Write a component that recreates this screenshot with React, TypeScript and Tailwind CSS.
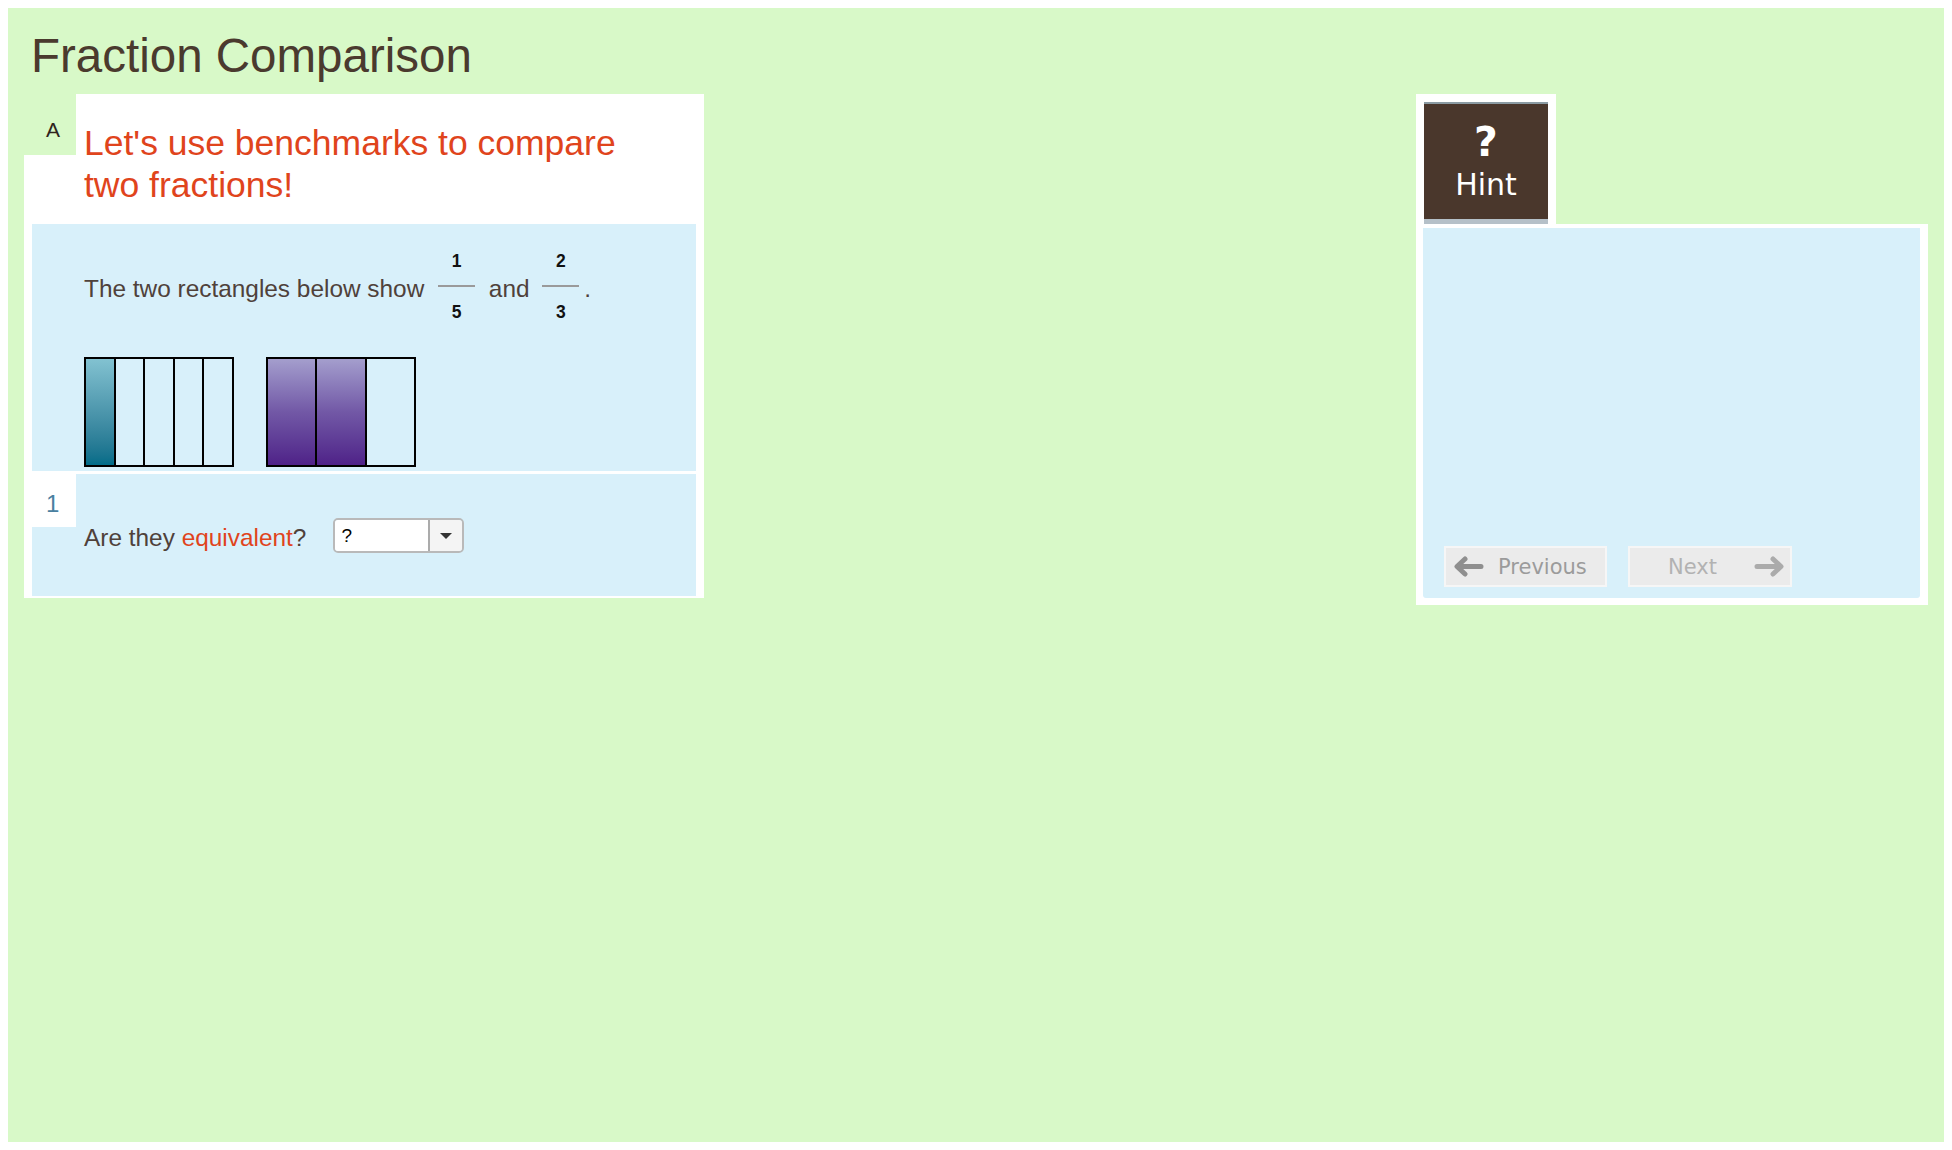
import React from "react";

const SANS = { fontFamily: "'Liberation Sans', Arial, sans-serif" };
const DEJAVU = { fontFamily: "'DejaVu Sans', Verdana, sans-serif" };

function Fraction({ top, bottom, className = "" }: { top: string; bottom: string; className?: string }) {
  return (
    <span
      className={`mb-[8px] inline-flex flex-col items-center align-middle text-[17.5px] font-bold leading-[20px] text-[#111] ${className}`}
    >
      <span>{top}</span>
      <span className="mb-[15px] mt-[14px] h-[2px] w-[37px] bg-[#9a9a9a]" />
      <span>{bottom}</span>
    </span>
  );
}

function FractionBar({ parts, filled, shade }: { parts: number; filled: number; shade: string }) {
  return (
    <div className="flex h-[110px] w-[150px] border-2 border-black">
      {Array.from({ length: parts }).map((_, i) => (
        <div
          key={i}
          className={`flex-1 ${i > 0 ? "border-l-2 border-black" : ""} ${i < filled ? shade : ""}`}
        />
      ))}
    </div>
  );
}

function Arrow({ dir, color }: { dir: "left" | "right"; color: string }) {
  return (
    <svg width="31" height="21" viewBox="0 0 31 21" className={dir === "right" ? "-scale-x-100" : ""}>
      <path
        d="M12 3 L4 10.5 L12 18 M5 10.5 H28"
        fill="none"
        stroke={color}
        strokeWidth="5"
        strokeLinecap="round"
        strokeLinejoin="round"
      />
    </svg>
  );
}

export default function App() {
  return (
    <div className="min-h-screen bg-white p-2" style={SANS}>
      <div className="h-[1134px] bg-[#d8f9c8]">
        <div className="h-[86px] pl-[23px] pt-[22px]">
          <h1 className="text-[47.5px] leading-[52px] text-[#4a3a2e]">Fraction Comparison</h1>
        </div>

        <div className="flex items-start justify-between px-4">
          {/* problem panel */}
          <div className="relative w-[680px] bg-white px-2 pb-[2px] pt-[28px]">
            <div className="absolute left-0 top-0 h-[61px] w-[52px] bg-[#d8f9c8] pl-[22px] pt-[25px] text-[21px] leading-[21px] text-[#2f241d]">
              A
            </div>
            <h2 className="ml-[52px] max-w-[560px] text-[35.5px] leading-[42px] text-[#e0441c]">
              Let's use benchmarks to compare two fractions!
            </h2>

            <div className="mt-[18px] h-[247px] bg-[#d8f0fa] pl-[52px] pt-[27px]">
              <p className="text-[24.4px] leading-[28px] text-[#4f413a]">
                The two rectangles below show{" "}
                <Fraction top="1" bottom="5" className="mx-[7px]" />
                {" "}and{" "}
                <Fraction top="2" bottom="3" className="ml-[6px] mr-[5px]" />.
              </p>
              <div className="mt-[27px] flex gap-[32px]">
                <FractionBar parts={5} filled={1} shade="bg-linear-to-b from-[#82c2d1] to-[#006c88]" />
                <FractionBar parts={3} filled={2} shade="bg-linear-to-b from-[#a49ecd] via-[#7258a6] to-[#4f2188]" />
              </div>
            </div>

            <div className="relative mt-[3px] h-[122px] bg-[#d8f0fa] pl-[52px] pt-[44px]">
              <div className="absolute left-0 top-0 h-[53px] w-[44px] bg-white pl-[14px] pt-[18px] text-[24px] leading-[24px] text-[#4a80a0]">
                1
              </div>
              <div className="flex items-start">
                <span className="pt-[6px] text-[24.4px] leading-[28px] text-[#4f413a]">
                  Are they <span className="text-[#e0441c]">equivalent</span>?
                </span>
                <div className="ml-[27px] flex h-[35px] w-[131px] overflow-hidden rounded-[5px] border-2 border-[#b9b9b9]">
                  <div className="flex-1 bg-white pl-[6px] text-[19px] leading-[31px] text-black">?</div>
                  <div className="flex w-[34px] items-center justify-center border-l-2 border-[#ababab] bg-[#f4f4f4]">
                    <div className="h-0 w-0 border-x-[6px] border-t-[6px] border-x-transparent border-t-[#333]" />
                  </div>
                </div>
              </div>
            </div>
          </div>

          {/* hint panel */}
          <div className="w-[512px]" style={DEJAVU}>
            <div className="h-[130px] w-[140px] bg-white px-2 pt-2">
              <button className="flex h-[122px] w-full flex-col items-center border-t-2 border-b-[5px] border-t-[#8b9ba3] border-b-[#b5c0c8] bg-[#4a372c] pt-[17px] text-white">
                <span className="text-[41px] font-bold leading-[42px]">?</span>
                <span className="mt-[7px] text-[30px] leading-[30px]">Hint</span>
              </button>
            </div>
            <div className="h-[381px] bg-white pb-[7px] pl-[7px] pr-2 pt-1">
              <div className="flex h-full items-end gap-[21px] rounded-b-[3px] bg-[#d8f0fa] pb-[11px] pl-[21px]">
                <button className="flex h-[41px] w-[163px] items-center border-2 border-[#f6f6f6] bg-[#ebebeb] pl-[7px]">
                  <Arrow dir="left" color="#8f8f8f" />
                  <span className="ml-[14px] text-[21px] leading-[24px] text-[#9b9b9b]">Previous</span>
                </button>
                <button className="flex h-[41px] w-[164px] items-center border-2 border-[#f6f6f6] bg-[#ebebeb] pl-[38px] pr-[5px]">
                  <span className="text-[21px] leading-[24px] text-[#b2b2b2]">Next</span>
                  <span className="ml-auto flex">
                    <Arrow dir="right" color="#ababab" />
                  </span>
                </button>
              </div>
            </div>
          </div>
        </div>
      </div>
    </div>
  );
}
